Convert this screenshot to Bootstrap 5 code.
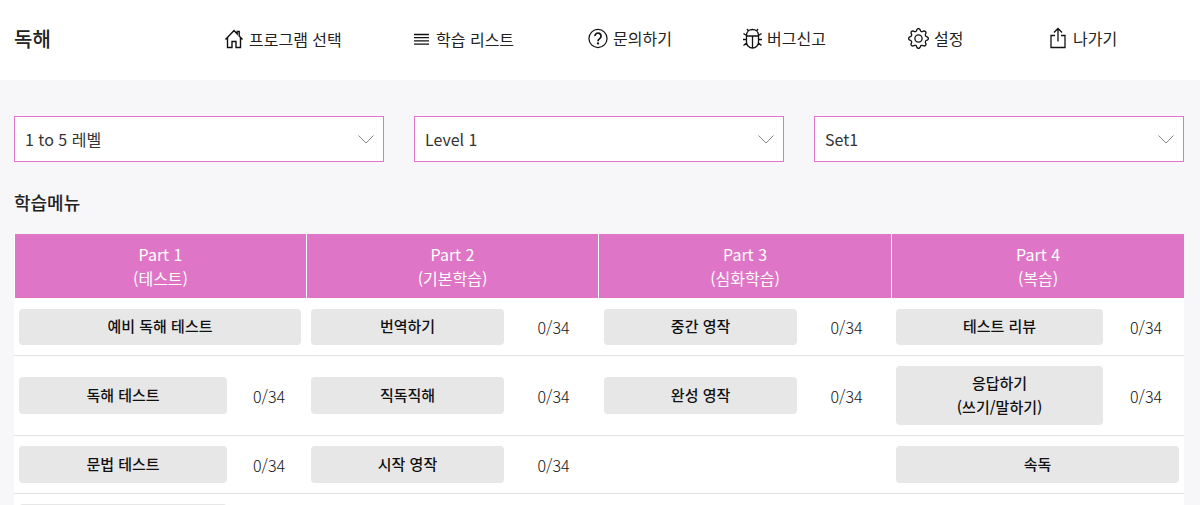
<!DOCTYPE html>
<html lang="ko">
<head>
  <meta charset="UTF-8" />
  <meta name="viewport" content="width=device-width, initial-scale=1.0"/>
  <title>독해</title>
  <link href="https://cdn.jsdelivr.net/npm/bootstrap@5.3.3/dist/css/bootstrap.min.css" rel="stylesheet">
  <style>
    body {
      background: #f7f7fa;
      color: #222;
      font-family: "Noto Sans CJK KR", "Noto Sans", sans-serif;
      font-size: 16px;
    }
    .top-bar {
      height: 80px;
      background: #fff;
      padding: 0 14px;
    }
    .top-title {
      width: 210px;
      font-size: 20px;
      font-weight: 500;
      margin: 0;
      padding-bottom: 3px;
    }
    .top-link {
      color: #222;
      text-decoration: none;
      white-space: nowrap;
      font-size: 16px;
      gap: 5px;
    }
    .top-link svg { flex: none; }
    .top-item:nth-child(1) { width: 189px; }
    .top-item:nth-child(2) { width: 175px; }
    .top-item:nth-child(3) { width: 155px; }
    .top-item:nth-child(4) { width: 165px; }
    .top-item:nth-child(5) { width: 141px; }
    .page-body { padding: 36px 16px 0 14px; }
    .select-row { --bs-gutter-x: 30px; }
    .level-select {
      height: 46px;
      padding: 0 40px 0 10px;
      border: 1px solid #de75c6;
      border-radius: 0;
      color: #333;
      font-size: 16px;
      background-size: 16px 9px;
      background-position: right 9px center;
      background-image: url("data:image/svg+xml,%3csvg xmlns='http://www.w3.org/2000/svg' viewBox='0 0 16 9'%3e%3cpath fill='none' stroke='%23888' d='M.5.5l7.500 7.500 7.500-7.500'/%3e%3c/svg%3e");
    }
    .menu-title {
      font-size: 18px;
      font-weight: 500;
      margin: 27px 0 18px;
      line-height: 27px;
    }
    .study-table {
      width: 1170px;
      table-layout: fixed;
      border-collapse: separate;
      border-spacing: 0;
      background: #fff;
      margin: 0;
    }
    .study-table th {
      height: 65px;
      background: #de75c6;
      color: #fff;
      font-weight: 400;
      font-size: 16px;
      line-height: 24px;
      text-align: center;
      vertical-align: middle;
      padding: 0;
      border-left: 1px solid #fff;
      border-bottom: 1px solid #fff;
    }
    .study-table td {
      padding: 10px 5px;
      vertical-align: middle;
      border-bottom: 1px solid #e0e2e8;
    }
    .study-table td.third-part { padding-left: 6px; }
    .study-table tr > td.cnt {
      padding: 0;
      text-align: center;
      font-weight: 300;
      color: #111;
    }
    .c1 { width: 218px; }
    .c2 { width: 74px; }
    .c3 { width: 203px; }
    .c4 { width: 89px; }
    .c5 { width: 204px; }
    .c6 { width: 89px; }
    .c7 { width: 217px; }
    .c8 { width: 76px; }
    .study-btn {
      display: block;
      width: 100%;
      min-height: 37px;
      padding: 5px 8px 7px;
      border: 0;
      border-radius: 4px;
      background: #e7e7e7;
      color: #111;
      font-size: 15px;
      font-weight: 500;
      line-height: 23.5px;
    }
    .first-row .study-btn { min-height: 36px; padding: 4px 8px 6px; }
    .study-btn:hover { background: #dcdcdc; color: #111; }
  </style>
</head>
<body>
<header class="top-bar d-flex align-items-center">
  <h1 class="top-title">독해</h1>
  <nav class="d-flex align-items-center">
    <div class="top-item"><a href="#" class="top-link d-inline-flex align-items-center">
      <svg width="20" height="20" viewBox="0 0 20 20" fill="none" stroke="#111" stroke-width="1.400"><path d="M1.500 10.500L10 1.500l3.200 3.400V2.500h2v4.500l3.300 3.500M3.500 8.500v10h4.500v-6h4v6h4.500v-10"/></svg>
      프로그램 선택</a></div>
    <div class="top-item"><a href="#" class="top-link d-inline-flex align-items-center">
      <svg width="18" height="20" viewBox="0 0 18 20" fill="none" stroke="#111" stroke-width="1.300"><path d="M1 5.500h15M1 8.700h15M1 11.900h15M1 15.100h15"/></svg>
      학습 리스트</a></div>
    <div class="top-item"><a href="#" class="top-link d-inline-flex align-items-center">
      <svg width="20" height="21" viewBox="0 0 21 21" fill="none" stroke="#111" stroke-width="1.300"><circle cx="10.500" cy="10.500" r="9.500"/><path stroke-width="1.800" d="M7.300 8a3.200 3.200 0 1 1 5 2.600c-1.200.8-1.800 1.300-1.800 2.700"/><circle cx="10.500" cy="15.700" r="1.200" fill="#111" stroke="none"/></svg>
      문의하기</a></div>
    <div class="top-item"><a href="#" class="top-link d-inline-flex align-items-center">
      <svg width="19" height="21" viewBox="0 0 19 21" fill="none" stroke="#111" stroke-width="1.300"><path d="M3.500 7.500C3.500 3.500 6.500 1.500 9.500 1.500s6 2 6 6V14c0 3.500-2.700 6-6 6s-6-2.500-6-6zM3.500 8h12M9.500 8v12M5.500 3L4 1M13.500 3L15 1M3.500 7.500L.5 5.500M15.500 7.500l3-2M3.500 11.500H0M15.500 11.500H19M3.500 15l-3 2.500M15.500 15l3 2.500"/></svg>
      버그신고</a></div>
    <div class="top-item"><a href="#" class="top-link d-inline-flex align-items-center">
      <svg width="21" height="21" viewBox="0 0 16 16" fill="#111"><path d="M8 4.754a3.246 3.246 0 1 0 0 6.492 3.246 3.246 0 0 0 0-6.492zM5.754 8a2.246 2.246 0 1 1 4.492 0 2.246 2.246 0 0 1-4.492 0z"/><path d="M9.796 1.343c-.527-1.790-3.065-1.790-3.592 0l-.094.319a.873.873 0 0 1-1.255.520l-.292-.160c-1.640-.892-3.433.902-2.540 2.541l.159.292a.873.873 0 0 1-.520 1.255l-.319.094c-1.790.527-1.790 3.065 0 3.592l.319.094a.873.873 0 0 1 .520 1.255l-.160.292c-.892 1.640.901 3.434 2.541 2.540l.292-.159a.873.873 0 0 1 1.255.520l.094.319c.527 1.790 3.065 1.790 3.592 0l.094-.319a.873.873 0 0 1 1.255-.520l.292.160c1.640.893 3.434-.902 2.540-2.541l-.159-.292a.873.873 0 0 1 .520-1.255l.319-.094c1.790-.527 1.790-3.065 0-3.592l-.319-.094a.873.873 0 0 1-.520-1.255l.160-.292c.893-1.640-.902-3.433-2.541-2.540l-.292.159a.873.873 0 0 1-1.255-.520l-.094-.319zm-2.633.283c.246-.835 1.428-.835 1.674 0l.094.319a1.873 1.873 0 0 0 2.693 1.115l.291-.160c.764-.415 1.600.420 1.184 1.185l-.159.292a1.873 1.873 0 0 0 1.116 2.692l.318.094c.835.246.835 1.428 0 1.674l-.319.094a1.873 1.873 0 0 0-1.115 2.693l.160.291c.415.764-.420 1.600-1.185 1.184l-.291-.159a1.873 1.873 0 0 0-2.693 1.116l-.094.318c-.246.835-1.428.835-1.674 0l-.094-.319a1.873 1.873 0 0 0-2.692-1.115l-.292.160c-.764.415-1.600-.420-1.184-1.185l.159-.291A1.873 1.873 0 0 0 1.945 8.930l-.319-.094c-.835-.246-.835-1.428 0-1.674l.319-.094A1.873 1.873 0 0 0 3.060 4.377l-.160-.292c-.415-.764.420-1.600 1.185-1.184l.292.159a1.873 1.873 0 0 0 2.692-1.115l.094-.319z"/></svg>
      설정</a></div>
    <div class="top-item"><a href="#" class="top-link d-inline-flex align-items-center">
      <svg width="19" height="22" viewBox="0 0 18 22" fill="none" stroke="#111" stroke-width="1.300"><path d="M5.500 8.500H1.500v12h14v-12h-4M8.500 14.500V1.500M4.500 5.500l4-4 4 4"/></svg>
      나가기</a></div>
  </nav>
</header>

<main class="page-body">
  <div class="row select-row">
    <div class="col-4">
      <select class="form-select level-select"><option>1 to 5 레벨</option></select>
    </div>
    <div class="col-4">
      <select class="form-select level-select"><option>Level 1</option></select>
    </div>
    <div class="col-4">
      <select class="form-select level-select"><option>Set1</option></select>
    </div>
  </div>

  <h2 class="menu-title">학습메뉴</h2>

  <table class="study-table">
    <colgroup>
      <col class="c1"><col class="c2"><col class="c3"><col class="c4">
      <col class="c5"><col class="c6"><col class="c7"><col class="c8">
    </colgroup>
    <thead>
      <tr>
        <th colspan="2">Part 1<br>(테스트)</th>
        <th colspan="2">Part 2<br>(기본학습)</th>
        <th colspan="2">Part 3<br>(심화학습)</th>
        <th colspan="2">Part 4<br>(복습)</th>
      </tr>
    </thead>
    <tbody>
      <tr class="first-row">
        <td colspan="2"><button class="study-btn">예비 독해 테스트</button></td>
        <td><button class="study-btn">번역하기</button></td><td class="cnt">0/34</td>
        <td class="third-part"><button class="study-btn">중간 영작</button></td><td class="cnt">0/34</td>
        <td><button class="study-btn">테스트 리뷰</button></td><td class="cnt">0/34</td>
      </tr>
      <tr>
        <td><button class="study-btn">독해 테스트</button></td><td class="cnt">0/34</td>
        <td><button class="study-btn">직독직해</button></td><td class="cnt">0/34</td>
        <td class="third-part"><button class="study-btn">완성 영작</button></td><td class="cnt">0/34</td>
        <td><button class="study-btn">응답하기<br>(쓰기/말하기)</button></td><td class="cnt">0/34</td>
      </tr>
      <tr>
        <td><button class="study-btn">문법 테스트</button></td><td class="cnt">0/34</td>
        <td><button class="study-btn">시작 영작</button></td><td class="cnt">0/34</td>
        <td colspan="2"></td>
        <td colspan="2"><button class="study-btn">속독</button></td>
      </tr>
      <tr>
        <td><button class="study-btn"></button></td><td class="cnt"></td>
        <td colspan="2"></td>
        <td colspan="2"></td>
        <td colspan="2"></td>
      </tr>
    </tbody>
  </table>
</main>
<script src="https://cdn.jsdelivr.net/npm/bootstrap@5.3.3/dist/js/bootstrap.bundle.min.js"></script>
</body>
</html>
